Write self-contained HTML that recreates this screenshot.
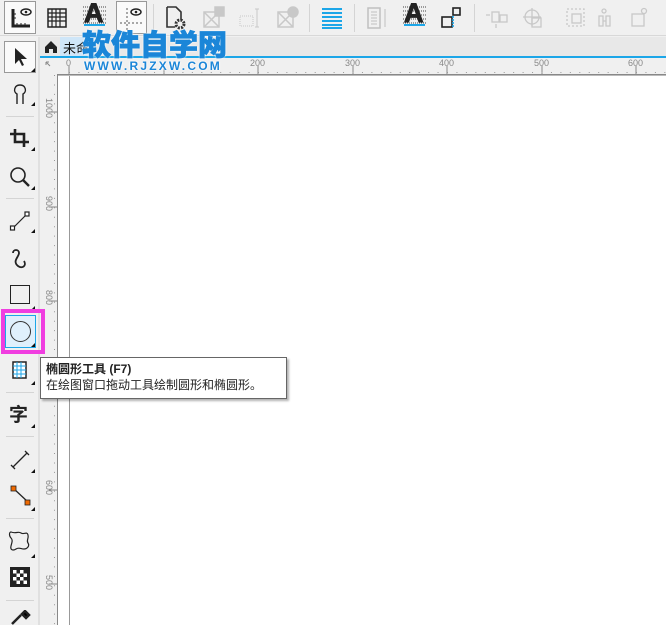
<!DOCTYPE html>
<html><head><meta charset="utf-8"><style>
*{margin:0;padding:0;box-sizing:border-box}
body{width:666px;height:625px;overflow:hidden;background:#f0f0f0;font-family:"Liberation Sans","Noto Sans CJK SC",sans-serif;position:relative}
.a{position:absolute}
.sep{position:absolute;width:1px;height:28px;top:4px;background:#d4d4d4}
.hsep{position:absolute;left:6px;width:28px;height:1px;background:#d4d4d4}
.tri{position:absolute;width:0;height:0;border-left:4px solid transparent;border-bottom:4px solid #111}
.hl{position:absolute;font-size:9px;color:#888}
.vl{position:absolute;font-size:9px;color:#888;transform:rotate(90deg);transform-origin:left top}
.bigA{position:absolute;font:bold 27px 'Liberation Sans';color:#222;line-height:27px;-webkit-text-stroke:1px #222}
</style></head><body>
<div class="a" style="left:0;top:0;width:666px;height:36px;background:#f0f0f0;border-bottom:1px solid #d8d8d8"></div>
<div class="a" style="left:4px;top:1px;width:32px;height:33px;border:1px solid #999;background:#fafafa"></div>
<svg class="a" style="left:10px;top:6px" width="22" height="22"><path d="M3 3v17h17" stroke="#222" stroke-width="3" fill="none"/><path d="M7 20v-3M11 20v-3M15 20v-3M3 8h3M3 12h3" stroke="#222"/><ellipse cx="16" cy="6" rx="5" ry="3" fill="none" stroke="#222" stroke-width="1.5"/><circle cx="16" cy="6" r="1.3" fill="#222"/></svg>
<svg class="a" style="left:46px;top:6px" width="22" height="22"><rect x="2" y="3" width="18" height="18" fill="none" stroke="#222" stroke-width="1.5"/><path d="M6 3v18M10 3v18M14 3v18M2 7h18M2 11h18M2 15h18" stroke="#222" stroke-width="1.2"/></svg>
<svg class="a" style="left:83px;top:4px" width="24" height="22"><path d="M0 3h24M0 7h24M0 11h24M0 15h24M0 19h24" stroke="#444" stroke-dasharray="1 1"/></svg>
<div class="bigA" style="left:84px;top:0px">A</div>
<div class="a" style="left:84px;top:24px;width:21px;height:2px;background:#1ca6e8"></div>
<div class="a" style="left:116px;top:1px;width:31px;height:33px;border:1px solid #999;background:#fafafa"></div>
<svg class="a" style="left:118px;top:4px" width="28" height="28"><path d="M9 4v22M2 19h22" stroke="#555" stroke-dasharray="2 2"/><ellipse cx="18" cy="8" rx="5" ry="3" fill="none" stroke="#222" stroke-width="1.5"/><circle cx="18" cy="8" r="1.3" fill="#222"/></svg>
<div class="sep" style="left:153px"></div>
<svg class="a" style="left:164px;top:5px" width="26" height="26"><path d="M3 2h9l5 5v8M3 2v20h8" stroke="#333" stroke-width="1.6" fill="none"/><circle cx="16" cy="19" r="4" fill="none" stroke="#333" stroke-width="3" stroke-dasharray="2 1.2"/></svg>
<svg class="a" style="left:202px;top:6px" width="24" height="24" stroke="#c8c8c8" fill="none" stroke-width="1.5"><rect x="2" y="6" width="15" height="15"/><path d="M2 6l15 15M17 6L2 21"/><rect x="13" y="1" width="9" height="9" fill="#c8c8c8"/></svg>
<svg class="a" style="left:238px;top:6px" width="24" height="24" stroke="#c8c8c8" fill="none"><rect x="2" y="10" width="13" height="10" stroke-dasharray="1 1"/><path d="M19 3v18M17 3h4M17 21h4"/></svg>
<svg class="a" style="left:276px;top:6px" width="24" height="24" stroke="#c8c8c8" fill="none" stroke-width="1.5"><rect x="2" y="6" width="15" height="15"/><path d="M2 6l15 15M17 6L2 21"/><circle cx="17" cy="6" r="5" fill="#c8c8c8"/></svg>
<div class="sep" style="left:309px"></div>
<svg class="a" style="left:320px;top:6px" width="24" height="24"><path d="M2 3h20M2 7h20M2 11h20M2 15h20M2 19h20M2 22h20" stroke="#1ca6e8" stroke-width="2"/></svg>
<div class="sep" style="left:354px"></div>
<svg class="a" style="left:366px;top:6px" width="24" height="24" stroke="#c0c0c0" fill="none"><rect x="2" y="2" width="12" height="20" stroke-width="1.5"/><path d="M5 6h6M5 9h6M5 12h6M5 15h6M5 18h6M19 3v18"/></svg>
<svg class="a" style="left:403px;top:4px" width="24" height="22"><path d="M0 3h24M0 7h24M0 11h24M0 15h24M0 19h24" stroke="#444" stroke-dasharray="1 1"/></svg>
<div class="bigA" style="left:404px;top:0px">A</div>
<div class="a" style="left:404px;top:24px;width:21px;height:2px;background:#1ca6e8"></div>
<svg class="a" style="left:440px;top:6px" width="24" height="24" fill="none" stroke="#222" stroke-width="1.6"><rect x="2" y="11" width="10" height="10"/><rect x="13" y="2" width="7" height="7"/><path d="M13 10v12" stroke="#1ca6e8" stroke-dasharray="2 1"/></svg>
<div class="sep" style="left:474px"></div>
<svg class="a" style="left:484px;top:6px" width="176" height="24" fill="none" stroke="#c8c8c8" stroke-width="1.3"><rect x="8" y="6" width="7" height="10"/><rect x="16" y="9" width="7" height="7"/><path d="M2 9h4M12 18v4"/><circle cx="48" cy="11" r="7"/><path d="M48 2v18M39 11h18"/><rect x="48" y="12" width="9" height="9"/><rect x="83" y="3" width="17" height="17" stroke-dasharray="2 2"/><rect x="88" y="8" width="9" height="9"/><path d="M115 10v10h4v-10zM122 10v10h4v-10zM119 15h3"/><circle cx="120" cy="5" r="2"/><rect x="148" y="8" width="12" height="12"/><circle cx="160" cy="5" r="2.5"/></svg>
<div class="a" style="left:40px;top:37px;width:626px;height:19px;background:#e8e8e8"></div>
<div class="a" style="left:40px;top:56px;width:626px;height:2px;background:#1ca6e8"></div>
<svg class="a" style="left:44px;top:40px" width="14" height="13"><path d="M1 7L7 1l6 6v6H9V9H5v4H1z" fill="#222"/></svg>
<div class="a" style="left:60px;top:37px;width:30px;height:19px;background:#cfe6f8"></div>
<div class="a" style="left:63px;top:38px;font-size:13px;color:#111">未命</div>
<div class="a" style="left:40px;top:58px;width:626px;height:16px;background:#f0f0f0"></div>
<div class="a" style="left:57px;top:74px;width:609px;height:1px;background:#888"></div>
<div class="a" style="left:40px;top:58px;width:17px;height:567px;background:#f0f0f0"></div>
<div class="a" style="left:57px;top:74px;width:1px;height:551px;background:#888"></div>
<div class="a" style="left:58px;top:75px;width:608px;height:550px;background:#fff"></div>
<div class="a" style="left:69px;top:75px;width:1px;height:550px;background:#999"></div>
<div class="a" style="left:58px;top:75px;width:608px;height:1px;background:#bbb"></div>
<svg class="a" style="left:40px;top:58px" width="626" height="17"><g stroke="#888"><path d="M29 8v8M124 8v8M218 8v8M313 8v8M407 8v8M502 8v8M596 8v8"/></g><path d="M29 14.5H626" stroke="#999" stroke-dasharray="1 8.45"/><path d="M6 4l4 4M6 4h3M6 4v3" stroke="#888" fill="none"/></svg>
<div class="hl" style="left:66px;top:58px">0</div>
<div class="hl" style="left:250px;top:58px">200</div>
<div class="hl" style="left:345px;top:58px">300</div>
<div class="hl" style="left:439px;top:58px">400</div>
<div class="hl" style="left:534px;top:58px">500</div>
<div class="hl" style="left:628px;top:58px">600</div>
<svg class="a" style="left:40px;top:75px" width="17" height="550"><g stroke="#888"><path d="M9 37h8M9 132h8M9 226h8M9 320h8M9 415h8M9 509h8"/></g><path d="M14.5 0V550" stroke="#999" stroke-dasharray="1 8.45"/></svg>
<div class="vl" style="left:54px;top:98px">1000</div>
<div class="vl" style="left:54px;top:196px">900</div>
<div class="vl" style="left:54px;top:290px">800</div>
<div class="vl" style="left:54px;top:480px">600</div>
<div class="vl" style="left:54px;top:575px">500</div>
<div class="a" style="left:38px;top:37px;width:2px;height:588px;background:#e0e0e0"></div>
<div class="a" style="left:4px;top:41px;width:32px;height:32px;border:1px solid #999;background:#fafafa"></div>
<svg class="a" style="left:12px;top:46px" width="16" height="22"><path d="M3 2v16l4-4 3 6 2-1-3-6h6z" fill="#222"/></svg><div class="tri" style="left:31px;top:68px"></div>
<svg class="a" style="left:10px;top:82px" width="20" height="24" fill="none" stroke="#222" stroke-width="1.4"><path d="M7 22V12C3 10 4 3 10 3s7 7 3 9v10"/></svg><div class="tri" style="left:31px;top:102px"></div>
<div class="hsep" style="top:116px"></div>
<svg class="a" style="left:9px;top:127px" width="22" height="22" fill="none" stroke="#222" stroke-width="2.6"><path d="M6 2v13h14M1 7h14v13"/></svg><div class="tri" style="left:31px;top:147px"></div>
<svg class="a" style="left:9px;top:166px" width="22" height="22" fill="none" stroke="#222" stroke-width="1.6"><circle cx="9" cy="9" r="7"/><path d="M14 14l6 6" stroke-width="2.4"/></svg><div class="tri" style="left:31px;top:186px"></div>
<div class="hsep" style="top:198px"></div>
<svg class="a" style="left:9px;top:210px" width="22" height="22" fill="none" stroke="#222" stroke-width="1.2"><path d="M4 18L18 4"/><rect x="1.5" y="16" width="4" height="4" fill="#fff"/><rect x="16" y="2" width="4" height="4" fill="#fff"/></svg><div class="tri" style="left:31px;top:229px"></div>
<svg class="a" style="left:9px;top:246px" width="22" height="26" fill="none" stroke="#222" stroke-width="1.8"><path d="M4 7c0-4 6-4 6 0s-7 8-1 13c4 3 9 0 6-5"/></svg>
<div class="a" style="left:10px;top:285px;width:20px;height:19px;border:1.5px solid #222"></div><div class="tri" style="left:31px;top:306px"></div>
<div class="a" style="left:1px;top:309px;width:44px;height:45px;border:4px solid #f03ee0"></div>
<div class="a" style="left:5px;top:315px;width:31px;height:33px;border:1px solid #1ca6e8;background:#dff0fc"></div>
<div class="a" style="left:10px;top:321px;width:21px;height:21px;border:1.5px solid #333;border-radius:50%"></div>
<div class="tri" style="left:31px;top:343px"></div>
<svg class="a" style="left:10px;top:360px" width="20" height="20"><path d="M3 2h13v16H3z" fill="#fff" stroke="#222" stroke-width="1.5"/><path d="M7 2v16M11 2v16M3 6h13M3 10h13M3 14h13" stroke="#1ca6e8"/></svg><div class="tri" style="left:31px;top:381px"></div>
<div class="hsep" style="top:392px"></div>
<div class="a" style="left:9px;top:402px;font:bold 19px 'Noto Sans CJK SC',sans-serif;color:#222;line-height:24px">字</div><div class="tri" style="left:31px;top:424px"></div>
<div class="hsep" style="top:436px"></div>
<svg class="a" style="left:9px;top:449px" width="22" height="22" fill="none" stroke="#222" stroke-width="1.3"><path d="M4 18L18 4M2 16l4 4M16 2l4 4"/></svg><div class="tri" style="left:31px;top:469px"></div>
<svg class="a" style="left:9px;top:484px" width="22" height="24"><path d="M4 4l15 14" stroke="#222" stroke-width="1.3"/><rect x="2" y="2" width="5" height="5" fill="#f06a00" stroke="#222" stroke-width=".8"/><rect x="16" y="16" width="5" height="5" fill="#f06a00" stroke="#222" stroke-width=".8"/></svg><div class="tri" style="left:31px;top:507px"></div>
<div class="hsep" style="top:518px"></div>
<svg class="a" style="left:8px;top:529px" width="24" height="24" fill="none" stroke="#222" stroke-width="1.2"><path d="M3 3c5 2 7-1 10 1s6-2 7 2-2 5 0 8-1 6-4 6-5-2-8 0-6 1-5-3 2-6 0-8-2-6 0-6z"/></svg><div class="tri" style="left:31px;top:554px"></div>
<svg class="a" style="left:10px;top:567px" width="20" height="20"><rect width="20" height="20" fill="#222"/><g fill="#fff"><rect x="3" y="3" width="3.5" height="3.5"/><rect x="10" y="3" width="3.5" height="3.5"/><rect x="6.5" y="6.5" width="3.5" height="3.5"/><rect x="13.5" y="6.5" width="3.5" height="3.5"/><rect x="3" y="10" width="3.5" height="3.5"/><rect x="10" y="10" width="3.5" height="3.5"/><rect x="6.5" y="13.5" width="3.5" height="3.5"/><rect x="13.5" y="13.5" width="3.5" height="3.5"/></g></svg>
<div class="hsep" style="top:600px"></div>
<svg class="a" style="left:10px;top:610px" width="22" height="15"><path d="M2 14l9-9M12 4l3-3 4 4-3 3z" stroke="#222" stroke-width="2.5"/></svg>
<div class="a" style="left:40px;top:357px;width:247px;height:42px;background:#fff;border:1px solid #666;box-shadow:2px 2px 2px rgba(0,0,0,.3);padding:3px 0 0 5px;font-size:12px;color:#222;line-height:16px">
<div style="font-weight:bold">椭圆形工具 (F7)</div><div>在绘图窗口拖动工具绘制圆形和椭圆形。</div></div>
<div class="a" style="left:82px;top:25px;font:900 29px 'Noto Sans CJK SC','WenQuanYi Zen Hei',sans-serif;color:#1b86d8;letter-spacing:0px;line-height:36px;-webkit-text-stroke:0.8px #1b86d8;text-shadow:0 0 2px #fff,0 0 2px #fff,0 0 1px #fff">软件自学网</div>
<div class="a" style="left:84px;top:59px;font:bold 12px 'Liberation Sans';color:#1b86d8;letter-spacing:2.2px;text-shadow:0 0 2px #fff,0 0 2px #fff">WWW.RJZXW.COM</div>
</body></html>
